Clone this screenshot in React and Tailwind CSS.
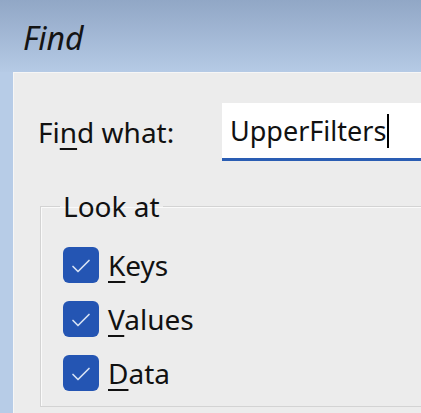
function Check({ label, hot }) {
  return (
    <label className="flex items-center gap-[9px] h-[36px]">
      <span className="w-[36px] h-[36px] rounded-[6px] bg-[#2455b3] flex items-center justify-center">
        <svg width="36" height="36" viewBox="0 0 36 36" fill="none">
          <path d="M10 19.5 L15 24.5 L26 13.5" stroke="#d6e1f4" strokeWidth="1.7" strokeLinecap="round" strokeLinejoin="round" />
        </svg>
      </span>
      <span className="text-[28px] leading-none text-[#111]">
        <span className="underline decoration-2 underline-offset-[5px]">{hot}</span>
        {label.slice(1)}
      </span>
    </label>
  );
}

export default function App() {
  return (
    <div className="w-[421px] h-[413px] overflow-hidden flex flex-col bg-[#b7cce7] font-['Noto_Sans',sans-serif] text-[#111]">
      <div className="h-[72px] shrink-0 bg-gradient-to-b from-[#91a7c6] to-[#b5cae5] pl-[23px] pt-[22px]">
        <span className="text-[32px] italic leading-none text-[#141414]">Find</span>
      </div>

      <div className="flex-1 ml-[13px] bg-[#ececec] border-t border-l border-[#f6f6f6] overflow-hidden">
        <div className="mt-[30px] flex items-center">
          <div className="w-[208px] pl-[24px] text-[28px] leading-none">
            Fi<span className="underline decoration-2 underline-offset-[5px]">n</span>d what:
          </div>
          <div className="flex-1 h-[58px] bg-white border-b-[3px] border-[#2a5db3] pl-[8px] flex items-center text-[27px] leading-none">
            UpperFilters
            <span className="inline-block w-[2px] h-[34px] bg-black ml-[1px]" />
          </div>
        </div>

        <fieldset className="mt-[28px] ml-[26px] w-[420px] h-[218px] border border-[#d3d3d3] shadow-[inset_1px_1px_0_#fafafa] pl-[22px]">
          <legend className="-ml-[3px] px-[3px] text-[28px] leading-[34px]">Look at</legend>
          <div className="mt-[24px] flex flex-col gap-[18px]">
            <Check label="Keys" hot="K" />
            <Check label="Values" hot="V" />
            <Check label="Data" hot="D" />
          </div>
        </fieldset>
      </div>
    </div>
  );
}
